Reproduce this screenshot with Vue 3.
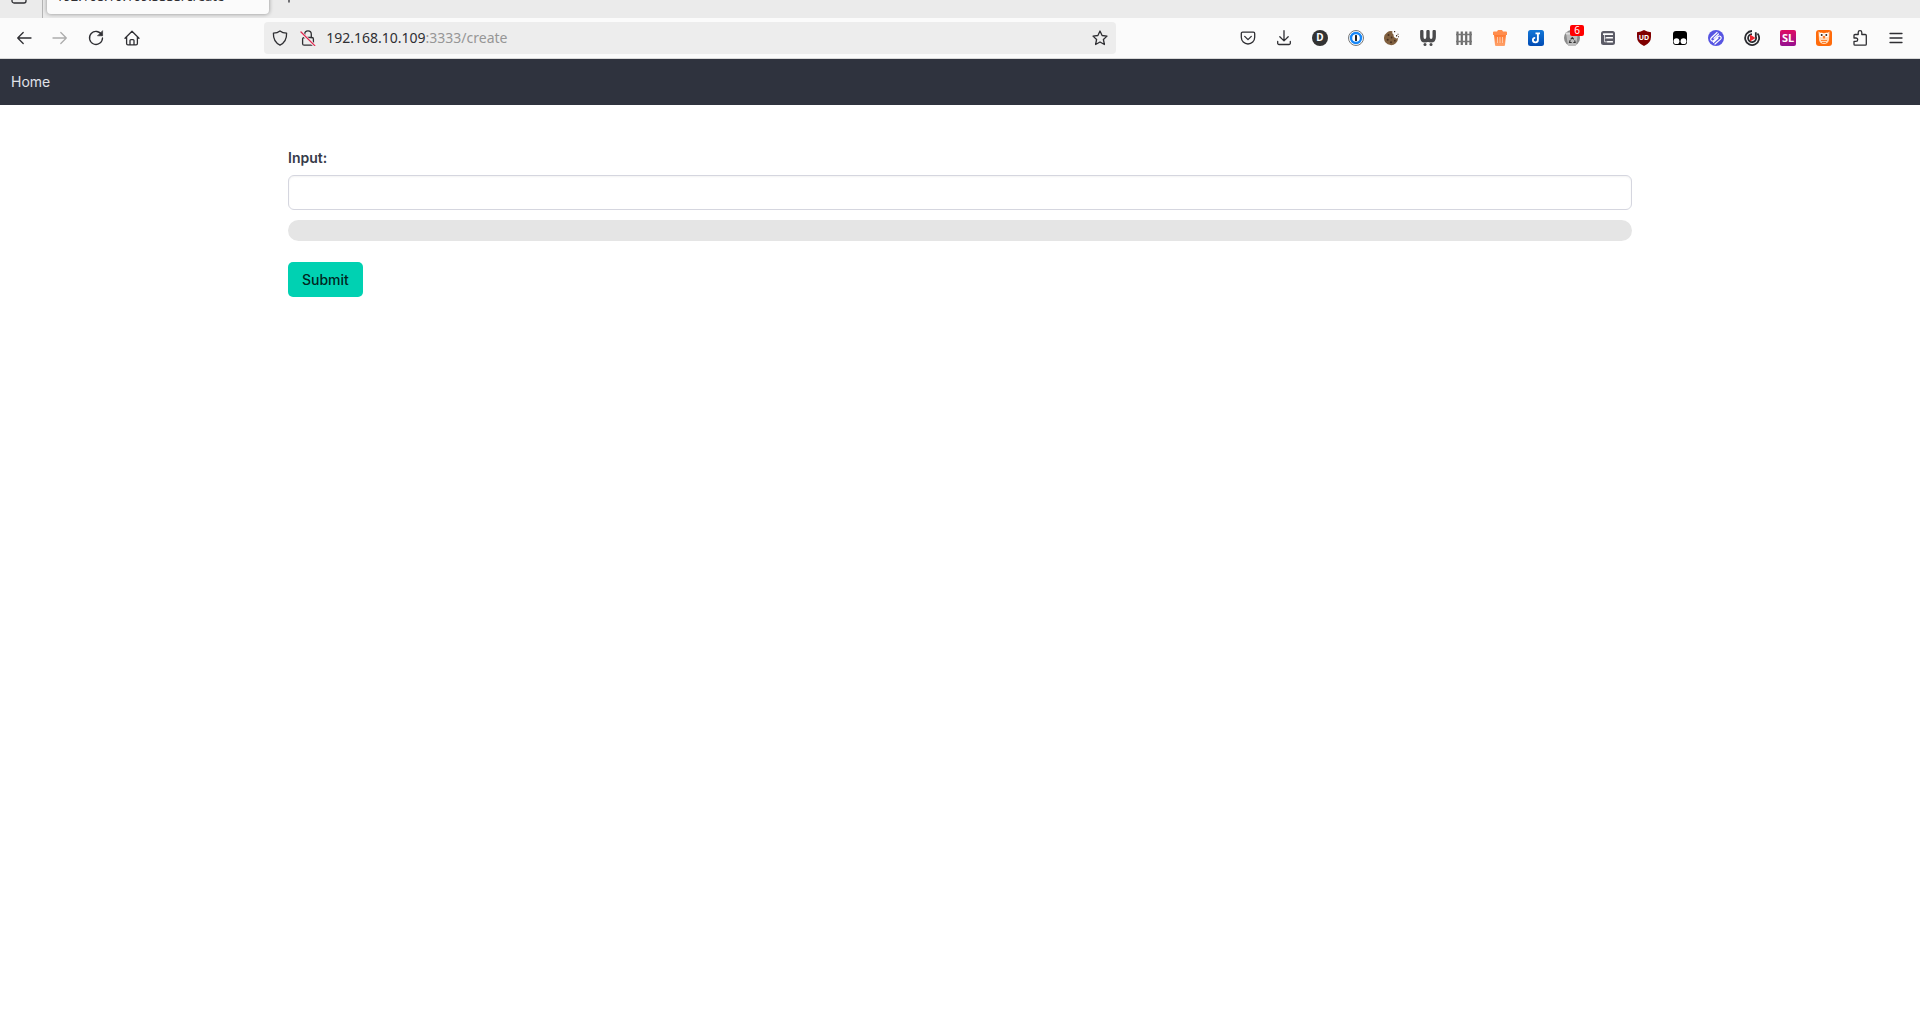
<script setup>
import { ref } from 'vue'

const value = ref('')
const url = { host: '192.168.10.109', path: ':3333/create' }
</script>

<template>
  <div class="window">
    <header class="browser">
      <div class="tabs">
        <button class="view" aria-label="Recent browsing">
          <svg viewBox="0 0 16 16" class="line"><rect x="1" y="1" width="14" height="14" rx="2" /></svg>
        </button>
        <div class="tab">{{ url.host }}{{ url.path }}</div>
        <button class="new-tab" aria-label="New tab">
          <svg viewBox="0 0 16 16" class="line"><path d="M8 2v12M2 8h12" /></svg>
        </button>
      </div>

      <div class="toolbar">
        <div class="tools">
          <button aria-label="Back">
            <svg viewBox="0 0 16 16" class="line"><path d="M15 8H1.700M7.200 2.500L1.700 8l5.500 5.500" /></svg>
          </button>
          <button aria-label="Forward" disabled>
            <svg viewBox="0 0 16 16" class="line"><path d="M1 8h13.300M8.800 2.500L14.300 8l-5.500 5.500" /></svg>
          </button>
          <button aria-label="Reload">
            <svg viewBox="0 0 16 16" class="line"><path d="M13.800 5A6.500 6.500 0 1 0 14.500 8" /><path d="M14.600 1v4.800H9.800z" fill="currentColor" stroke-width="0.6" /></svg>
          </button>
          <button aria-label="Home">
            <svg viewBox="0 0 16 16" class="line"><path d="M1 8.200L8 1.300l7 6.900M2.600 7v6.600a1.300 1.300 0 0 0 1.300 1.300h8.200a1.300 1.300 0 0 0 1.300-1.300V7M6 14.800v-4.200a1 1 0 0 1 1-1h2a1 1 0 0 1 1 1v4.200" /></svg>
          </button>
        </div>

        <div class="spring"></div>
        <div class="urlbar">
          <svg viewBox="0 0 16 16" class="line"><path d="M8 .9c2 1.600 4.200 2.100 6.600 2.200.2 5.300-1.500 9.700-6.600 12C2.900 12.800 1.200 8.400 1.400 3.100 3.800 3 6 2.500 8 .9z" /></svg>
          <svg viewBox="0 0 16 16" class="line"><rect x="2.600" y="7.500" width="10.800" height="7.700" rx="1.500" /><path d="M4.700 7.500V4.200a3.300 3.300 0 0 1 6.600 0v3.300" /><path d="M1.400 2.800l13.200 12.700" stroke="#ededed" stroke-width="3" /><path d="M1 2l13.800 13.600" stroke="#e22850" /></svg>
          <span class="address">{{ url.host }}<span class="path">{{ url.path }}</span></span>
          <button aria-label="Bookmark this page">
            <svg viewBox="0 0 16 16" class="line"><path d="M8 1l2.100 4.500 4.900.6-3.600 3.400 1 5L8 12l-4.400 2.500 1-5L1 6.100l4.900-.6z" /></svg>
          </button>
        </div>
        <div class="spring"></div>

        <div class="tools">
          <button aria-label="Pocket">
            <svg viewBox="0 0 16 16" class="line"><path d="M2.600 2.200h10.800a1.300 1.300 0 0 1 1.300 1.300v3.800a6.700 6.700 0 0 1-13.400 0V3.500a1.300 1.300 0 0 1 1.300-1.300zM4.700 6.400L8 9.600l3.300-3.200" /></svg>
          </button>
          <button aria-label="Downloads">
            <svg viewBox="0 0 16 16" class="line"><path d="M8 .7v10M3.800 6.700L8 10.900l4.200-4.200M1.700 11.500v1.700a1.300 1.300 0 0 0 1.300 1.300h10a1.300 1.300 0 0 0 1.300-1.300v-1.700" /></svg>
          </button>
          <button aria-label="Dashboard">
            <svg viewBox="0 0 16 16"><circle cx="8" cy="8" r="8" fill="#333" /><text x="8" y="11.300" class="letter" font-size="10">D</text></svg>
          </button>
          <button aria-label="Password manager">
            <svg viewBox="0 0 16 16"><circle cx="8" cy="8" r="7.500" fill="#fff" stroke="#777" /><circle cx="8" cy="8" r="5" fill="#fff" stroke="#1687f8" stroke-width="2.400" /><rect x="7" y="5" width="2" height="6" rx=".5" fill="#222" /></svg>
          </button>
          <button aria-label="Cookies">
            <svg viewBox="0 0 16 16"><path d="M8.500 1.300a3 3 0 0 0 1.200 3.500 2.500 2.500 0 0 0 1.500 3 2.500 2.500 0 0 0 2.800.3A7 7 0 1 1 8.500 1.300z" fill="#80603f" /><g fill="#49301f"><circle cx="4.500" cy="5" r="1" /><circle cx="7.600" cy="7.500" r=".9" /><circle cx="3.700" cy="9.700" r="1" /><circle cx="7" cy="12.300" r="1" /><circle cx="10.800" cy="10.700" r=".9" /><path d="M10 1h1.200v1.200H10zM12 5h1.200v1.500H12zM13.500 3.700h1v1h-1zM14 6.300h1v1h-1z" /></g></svg>
          </button>
          <button aria-label="Wappalyzer">
            <svg viewBox="0 0 16 16"><path d="M1.800 1.500V7q0 3.800 3.100 3.800Q8 10.800 8 7V1.500M8 7q0 3.800 3.100 3.800 3.100 0 3.100-3.800V1.500" fill="none" stroke="#4a4a4c" stroke-width="3.400" stroke-linecap="round" /><circle cx="5" cy="14.400" r="1.500" fill="#4a4a4c" /><circle cx="11" cy="14.400" r="1.500" fill="#4a4a4c" /></svg>
          </button>
          <button aria-label="Fence">
            <svg viewBox="0 0 16 16" fill="none"><path d="M1.500 1.500V15M5.800 1.500V15M10.200 1.500V15M14.500 1.500V15" stroke="#6c6c6c" stroke-width="2.200" /><path d="M0 4.500h16M0 11.500h16" stroke="#777" stroke-width="1.600" /></svg>
          </button>
          <button aria-label="Clear data">
            <svg viewBox="0 0 16 16"><defs><linearGradient id="bin" x2="0" y2="1"><stop stop-color="#ff7a32" /><stop offset="1" stop-color="#ffa36c" /></linearGradient></defs><path d="M2 1.500h3L6 0h4l1 1.500h3a1 1 0 0 1 1 1V5H1V2.500a1 1 0 0 1 1-1z" fill="#ff8d4d" /><path d="M2 5h12l-1 10a1 1 0 0 1-1 1H4a1 1 0 0 1-1-1z" fill="url(#bin)" /><path d="M5.500 7v6M8 7v6M10.500 7v6" stroke="#ffc8a4" /></svg>
          </button>
          <button aria-label="Joplin">
            <svg viewBox="0 0 16 16"><defs><linearGradient id="note" x2="0" y2="1"><stop stop-color="#1478d8" /><stop offset="1" stop-color="#004bb4" /></linearGradient></defs><rect width="16" height="16" rx="2.500" fill="url(#note)" /><path d="M7.500 3.400h4.500M9.900 3.400v6.400a2.500 2.500 0 0 1-5 .2q0-2.200 2.300-2.100" fill="none" stroke="#fff" stroke-width="1.900" /></svg>
          </button>
          <button class="counted" aria-label="Cookie cleanup">
            <svg viewBox="0 0 16 16"><circle cx="8" cy="8" r="8" fill="#8b8b8b" /><path d="M2 3h12l-2 12.500a6 6 0 0 1-8 0z" fill="#bdbdbd" /><path d="M2 3.500h12" stroke="#ddd" stroke-width="2" /><path d="M6.700 9.300L8.300 7.500l1.500 1.800M10.600 10.300l.6 2.200H9.300M7.700 12.500H5.500l.7-2.300" fill="none" stroke="#333" stroke-width="1.100" /></svg>
            <span class="badge">6</span>
          </button>
          <button aria-label="Containers">
            <svg viewBox="0 0 16 16"><rect x="1" y="1" width="14" height="14" rx="2.500" fill="#5b5b66" /><g fill="#fff"><rect x="3" y="3.200" width="10" height="1.800" rx=".5" /><rect x="6" y="7" width="7" height="1.600" rx=".5" /><rect x="7" y="11" width="6" height="1.600" rx=".5" /></g><path d="M4.500 5v3h1.500M4.500 8v3.800H7" fill="none" stroke="#fff" stroke-width=".7" /></svg>
          </button>
          <button aria-label="uBlock Origin">
            <svg viewBox="0 0 16 16"><path d="M8 0q3 2 7 2.300V7q0 6-7 9-7-3-7-9V2.300Q5 2 8 0z" fill="#800000" /><text x="8" y="9.900" class="letter" font-size="7">UD</text></svg>
          </button>
          <button aria-label="Tampermonkey">
            <svg viewBox="0 0 16 16"><rect x="1" y="1" width="14" height="14" rx="3" fill="#000" /><circle cx="4.500" cy="11.200" r="2.900" fill="#fff" /><circle cx="11.500" cy="11.200" r="2.900" fill="#fff" /></svg>
          </button>
          <button aria-label="Link sharing">
            <svg viewBox="0 0 16 16"><circle cx="8" cy="8" r="8" fill="#5755e2" /><path d="M9 2.500L3.300 7.700a1.900 1.900 0 0 0 2.600 2.800l4.200-4a1.800 1.800 0 0 1 2.500 2.600L7 14M10.500 4L6 8.300M10 8L5.500 12.300" fill="none" stroke="#fff" stroke-width="1.200" stroke-linecap="round" /></svg>
          </button>
          <button aria-label="Playback">
            <svg viewBox="0 0 16 16"><path d="M8 1a7 7 0 1 0 5.500 2.500M8 4.100a4 4 0 1 0 3.800 2.500V2.300" fill="none" stroke="#292a2f" stroke-width="1.800" /><path d="M6 4.500L11.500 8 6 11.500z" fill="#ed252f" /></svg>
          </button>
          <button aria-label="SL">
            <svg viewBox="0 0 16 16"><defs><linearGradient id="sl" x2="0" y2="1"><stop stop-color="#df0d63" /><stop offset="1" stop-color="#951091" /></linearGradient></defs><rect width="16" height="16" rx="2" fill="url(#sl)" /><text x="8" y="12" class="letter" font-size="11">SL</text></svg>
          </button>
          <button aria-label="Owl">
            <svg viewBox="0 0 16 16"><rect width="16" height="16" rx="3" fill="#ff6b0b" /><path d="M2.500 1.500Q4 3 8 3t5.500-1.500L13 10q-1 4-5 4t-5-4z" fill="#ffd9b8" /><circle cx="5.500" cy="5" r="2.300" fill="#fff" /><circle cx="10.500" cy="5" r="2.300" fill="#fff" /><circle cx="5.700" cy="5" r="1" fill="#3b2416" /><circle cx="10.300" cy="5" r="1" fill="#3b2416" /><path d="M7 6.500h2L8 8.500zM5 10l1 1 1-1 1 1 1-1 1 1 1-1M6 12.500h4" fill="none" stroke="#ff6b0b" stroke-width=".8" /></svg>
          </button>
          <button aria-label="Extensions">
            <svg viewBox="0 0 16 16" class="line"><path d="M3 4.500h3.200V2.500a1.800 1.800 0 0 1 3.600 0v2h3.500a1 1 0 0 1 1 1v8.700a1 1 0 0 1-1 1H3a1 1 0 0 1-1-1v-2.800h2a1.700 1.700 0 0 0 0-3.400H2V5.500a1 1 0 0 1 1-1z" /></svg>
          </button>
          <button aria-label="Menu">
            <svg viewBox="0 0 16 16" class="line"><path d="M2 3.500h12M2 8h12M2 12.500h12" /></svg>
          </button>
        </div>
      </div>
    </header>

    <nav class="navbar"><a href="#">Home</a></nav>

    <main>
      <form @submit.prevent>
        <label for="value">Input:</label>
        <input id="value" v-model="value" type="text" />
        <progress value="0" max="100" aria-label="Progress"></progress>
        <button type="submit" class="submit">Submit</button>
      </form>
    </main>
  </div>
</template>

<style>
body {
  margin: 0;
  background: #fff;
}
</style>

<style scoped>
* {
  box-sizing: border-box;
}
.window {
  min-height: 100vh;
  font: 14px/21px Inter, sans-serif;
  color: #363a48;
}
button {
  margin: 0;
  padding: 0;
  border: 0;
  background: none;
  color: inherit;
  font: inherit;
}
svg {
  display: block;
  width: 16px;
  height: 16px;
  flex: none;
}
.line {
  fill: none;
  stroke: currentColor;
  stroke-width: 1.3;
  stroke-linecap: round;
  stroke-linejoin: round;
}
.letter {
  fill: #fff;
  font-family: "Noto Sans", sans-serif;
  font-weight: 700;
  text-anchor: middle;
}
.browser {
  font-family: "Noto Sans", sans-serif;
  line-height: 20px;
  color: #2f2f33;
}
.tabs {
  display: flex;
  align-items: flex-end;
  height: 18px;
  overflow: hidden;
  background: #ebebeb;
}
.view {
  display: flex;
  justify-content: center;
  width: 43px;
  height: 30px;
  padding-right: 4px;
  border-right: 1px solid #b4b4b4;
}
.tab {
  width: 222px;
  height: 36px;
  margin: 0 4px 4px;
  padding: 0 9px;
  border-radius: 4px;
  background: #fbfbfb;
  box-shadow: 0 0 4px rgb(0 0 0 / 40%);
  font-size: 13px;
  line-height: 36px;
  white-space: nowrap;
}
.new-tab {
  display: flex;
  align-items: center;
  justify-content: center;
  width: 32px;
  height: 44px;
}
.toolbar {
  display: flex;
  align-items: center;
  height: 41px;
  padding: 0 6px;
  border-bottom: 1px solid #d8d8d8;
  background: #fbfbfb;
}
.tools {
  display: flex;
}
.tools button {
  display: flex;
  align-items: center;
  justify-content: center;
  width: 36px;
  height: 32px;
}
.tools button:disabled {
  color: #adadad;
}
.spring {
  flex: 19;
}
.urlbar {
  display: flex;
  flex: 139;
  align-items: center;
  gap: 12px;
  height: 32px;
  padding: 0 8px;
  border-radius: 4px;
  background: #ededed;
}
.address {
  flex: 1;
  margin-left: -2px;
  white-space: nowrap;
}
.path {
  color: #969696;
}
.counted {
  position: relative;
}
.badge {
  position: absolute;
  top: 3px;
  right: 6px;
  width: 14px;
  height: 11px;
  border-radius: 2px;
  background: #f00;
  color: #fff;
  font-size: 10px;
  line-height: 11px;
  text-align: center;
}
.navbar {
  display: flex;
  align-items: center;
  height: 46px;
  padding: 0 11px;
  background: #2f333e;
  line-height: 20px;
}
.navbar a {
  color: #e0e2e8;
  text-decoration: none;
}
main {
  padding: 42px 24px;
}
form {
  display: flex;
  flex-direction: column;
  align-items: flex-start;
  max-width: 1344px;
  margin: 0 auto;
}
label {
  font-weight: 600;
}
input {
  width: 100%;
  height: 35px;
  margin: 7px 0 10px;
  padding: 0 10px;
  border: 1px solid #d5d6df;
  border-radius: 6px;
  background: #fff;
  box-shadow: inset 0 1px 2px rgb(10 10 10 / 5%);
  font: inherit;
}
progress {
  appearance: none;
  display: block;
  width: 100%;
  height: 21px;
  margin-bottom: 21px;
  border: 0;
  border-radius: 11px;
  overflow: hidden;
  background: #e5e5e5;
}
progress::-webkit-progress-bar {
  background: #e5e5e5;
}
.submit {
  height: 35px;
  padding: 0 14px;
  border-radius: 5px;
  background: #00d1b2;
  color: #00261f;
  font-weight: 500;
}
</style>
